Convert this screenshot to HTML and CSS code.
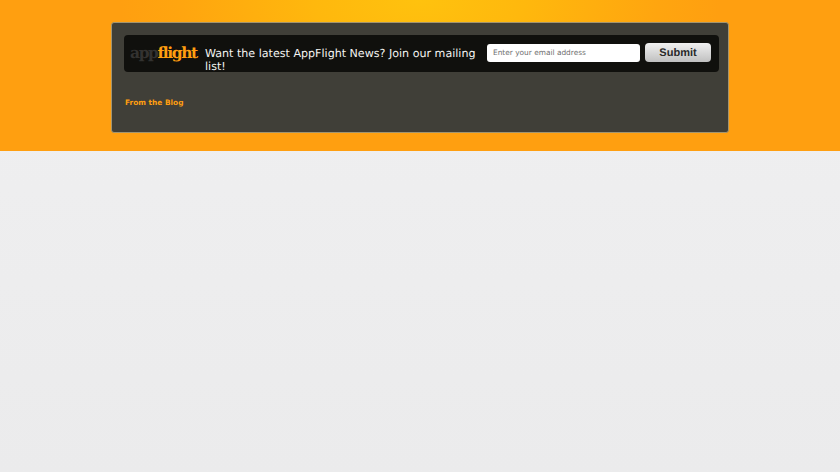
FILE: index.html
```html
<!DOCTYPE html>
<html lang="en">
<head>
<meta charset="utf-8">
<title>AppFlight</title>
<link rel="stylesheet" href="styles.css">
</head>
<body>
<header class="hero">
  <section class="panel">
    <form class="signup">
      <div class="logo"><span class="logo-app">app</span><span class="logo-flight">flight</span></div>
      <p class="pitch">Want the latest AppFlight News? Join our mailing list!</p>
      <div class="email">Enter your email address</div>
      <div class="submit">Submit</div>
    </form>
    <h2 class="blog">From the Blog</h2>
  </section>
</header>
</body>
</html>
```
FILE: styles.css
```css
* { box-sizing: border-box; }
html, body { height: 100%; }
body {
  margin: 0;
  background: linear-gradient(#f0f0f1, #ebebec);
  font-family: "DejaVu Sans", sans-serif;
  text-rendering: geometricPrecision;
}
.hero {
  height: 151px;
  padding-top: 22px;
  background: radial-gradient(ellipse 300px 140px at 420px 0, #ffc20e 0%, #ffb80d 35%, #ffa50f 80%, #ff9f10 100%) #ff9f10;
}
.panel {
  width: 618px;
  height: 111px;
  margin-left: 111px;
  padding: 12px 9px 0 12px;
  background: #403f38;
  border: 1px solid #a39570;
  border-radius: 3px;
}
.signup {
  display: flex;
  align-items: flex-start;
  height: 37px;
  background: #10100d;
  border-radius: 4px;
}
.logo {
  width: 81px;
  padding: 8px 0 0 6px;
  font-family: "DejaVu Serif", serif;
  font-weight: 700;
  font-size: 15.5px;
  line-height: 20px;
  letter-spacing: -1.4px;
  white-space: nowrap;
}
.logo-app { color: #333230; }
.logo-flight { color: #ff9e10; }
.pitch {
  width: 282px;
  margin: 0;
  padding-top: 12px;
  color: #f4f4f2;
  font-size: 11.1px;
  line-height: 13px;
}
.email {
  width: 153px;
  height: 18px;
  margin-top: 9px;
  padding-left: 6px;
  background: #fff;
  border-radius: 3px;
  color: #6f6f6f;
  font-size: 7.4px;
  line-height: 17px;
}
.submit {
  width: 66px;
  height: 19px;
  margin: 8px 0 0 5px;
  background: linear-gradient(#f0f0f0, #c0c0c0);
  border-radius: 4px;
  color: #2a2a2a;
  font-family: "Liberation Sans", sans-serif;
  font-weight: 700;
  font-size: 11px;
  line-height: 20px;
  text-align: center;
}
.blog {
  margin: 25px 0 0 1px;
  color: #ff9e10;
  font-size: 7.4px;
  font-weight: 700;
  line-height: 12px;
}
```
